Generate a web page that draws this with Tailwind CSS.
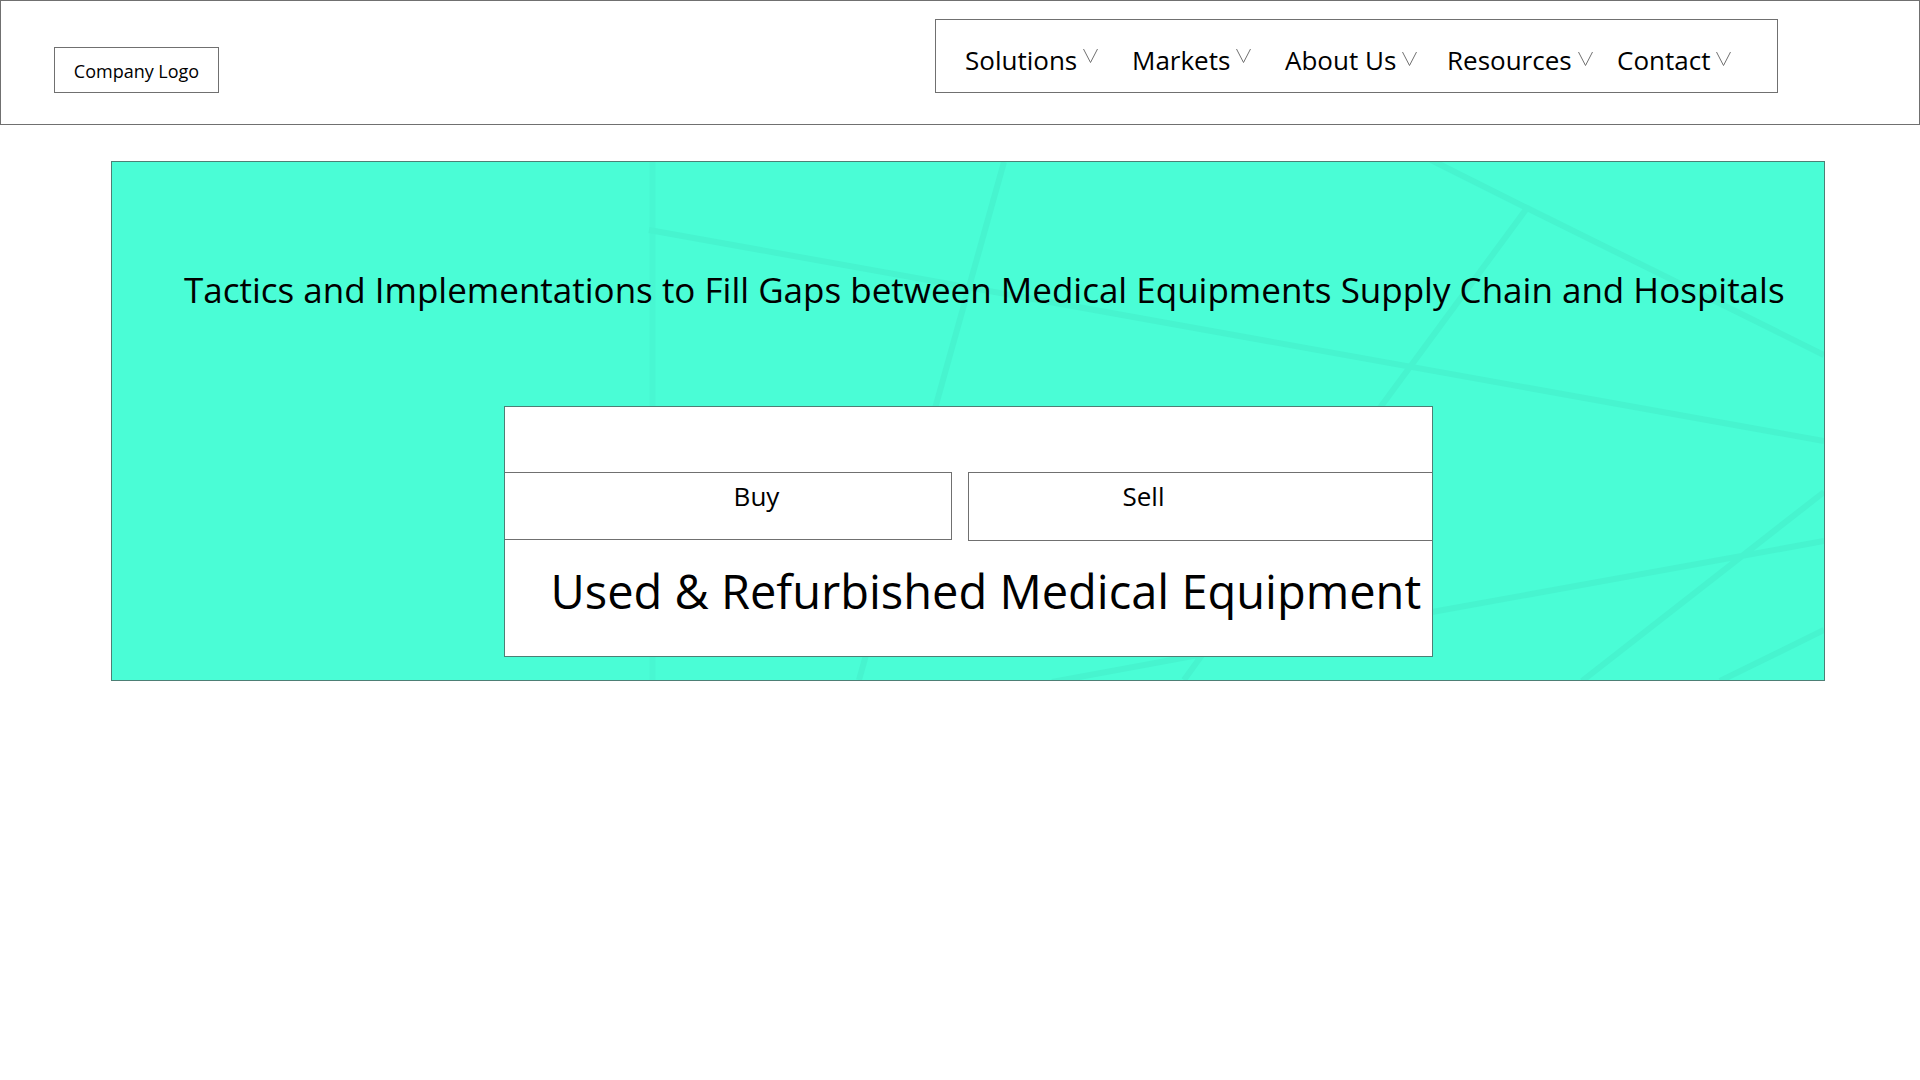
<!DOCTYPE html>
<html lang="en">
<head>
<meta charset="utf-8">
<meta name="viewport" content="width=device-width, initial-scale=1">
<title>Medical Equipment</title>
<script src="https://cdn.jsdelivr.net/npm/@tailwindcss/browser@4"></script>
</head>
<body class="min-h-screen bg-white font-['Segoe_UI','Open_Sans',sans-serif] text-black">
<header class="flex h-[125px] items-start justify-between border border-[#707070] pl-[53px] pr-[141px]">
  <a href="#" class="mt-[46px] flex h-[46px] w-[165px] items-center justify-center whitespace-nowrap border border-[#707070] pt-0.5 text-[18px] leading-6">Company Logo</a>
  <nav class="mt-[18px] h-[74px] w-[843px] border border-[#707070] pl-[29px] pt-[22px] text-[26px] leading-9">
    <ul class="grid grid-cols-[167px_153px_162px_170px_auto] whitespace-nowrap">
      <li><a href="#" class="flex items-start gap-1.5">Solutions <svg class="mt-[7px] h-[14px] w-[15px]" viewBox="0 0 15 14" fill="none" stroke="#707070"><path d="M.5 0 7.5 13.5 14.5 0"/></svg></a></li>
      <li><a href="#" class="flex items-start gap-1.5">Markets <svg class="mt-[7px] h-[14px] w-[15px]" viewBox="0 0 15 14" fill="none" stroke="#707070"><path d="M.5 0 7.5 13.5 14.5 0"/></svg></a></li>
      <li><a href="#" class="flex items-start gap-1.5">About Us <svg class="mt-2.5 h-[14px] w-[15px]" viewBox="0 0 15 14" fill="none" stroke="#707070"><path d="M.5 0 7.5 13.5 14.5 0"/></svg></a></li>
      <li><a href="#" class="flex items-start gap-1.5">Resources <svg class="mt-2.5 h-[14px] w-[15px]" viewBox="0 0 15 14" fill="none" stroke="#707070"><path d="M.5 0 7.5 13.5 14.5 0"/></svg></a></li>
      <li><a href="#" class="flex items-start gap-1.5">Contact <svg class="mt-2.5 h-[14px] w-[15px]" viewBox="0 0 15 14" fill="none" stroke="#707070"><path d="M.5 0 7.5 13.5 14.5 0"/></svg></a></li>
    </ul>
  </nav>
</header>
<main class="pl-[111px] pr-[95px] pt-9">
  <section class="relative border border-[#4d7f75] bg-[#4afdd6] pb-[23px] pt-[102px]">
    <!-- faint street-map lines behind the hero -->
    <svg class="absolute inset-0 size-full" viewBox="112 162 1712 518" preserveAspectRatio="none" fill="none" stroke="#47f4cf" stroke-width="6" aria-hidden="true">
      <path d="M652.500 162V680" stroke="#48f7d2"/>
      <path d="M649 230 1824 441M1004 162 859 680M1431 160 1527 208 1824 355M1527 208 1382 405 1184 680M1824 541 1432 612 1052 682M1824 492 1582 681M1824 630 1720 681"/>
    </svg>
    <h1 class="relative whitespace-nowrap pl-[72px] text-[35px] leading-[52px]">Tactics and Implementations to Fill Gaps between Medical Equipments Supply Chain and Hospitals</h1>
    <div class="relative mx-auto mt-[90px] w-[929px] max-w-full border border-[#4d7f75] bg-white pb-[30px] pt-[65px]">
      <div class="flex items-start gap-4">
        <button type="button" class="h-[68px] w-[447px] border border-l-0 border-[#707070] pb-5 pl-[58px] text-[26px] leading-9">Buy</button>
        <button type="button" class="h-[69px] flex-1 border border-r-0 border-[#707070] pb-[22px] pr-[113px] text-[26px] leading-9">Sell</button>
      </div>
      <h2 class="mt-4 whitespace-nowrap pl-[46px] text-[47px] leading-[69px]">Used &amp; Refurbished Medical Equipment</h2>
    </div>
  </section>
</main>
</body>
</html>
